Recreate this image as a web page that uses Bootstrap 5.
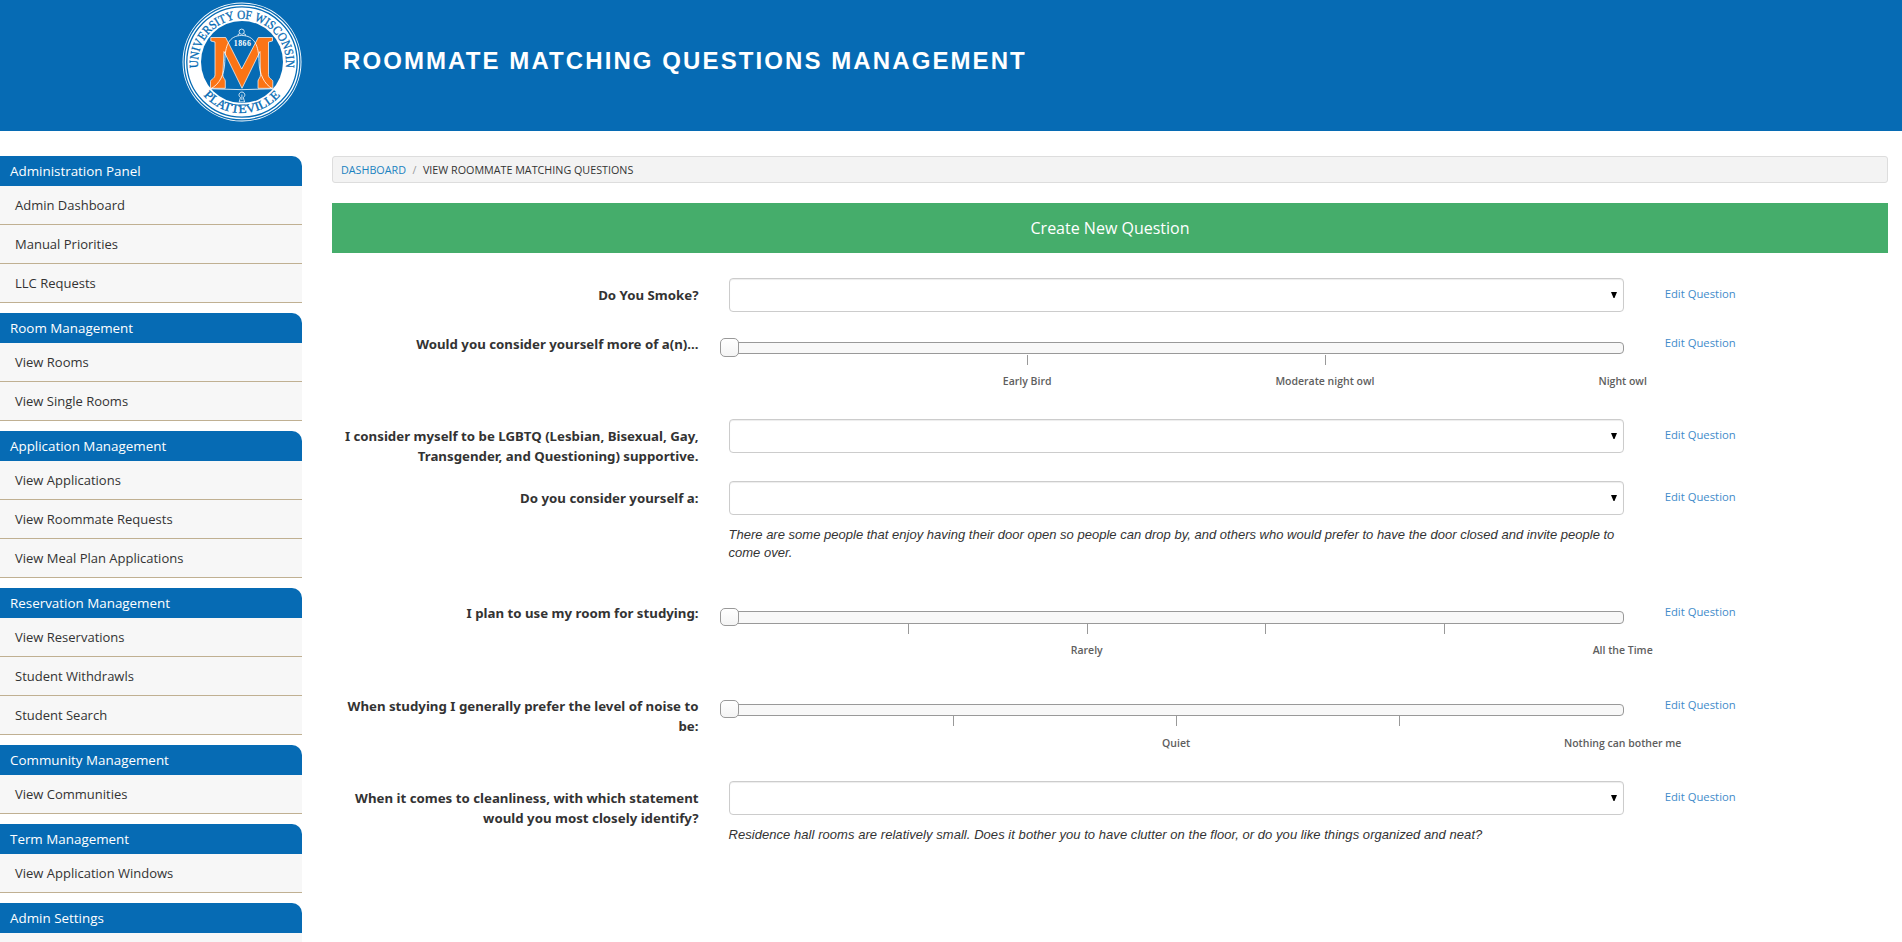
<!DOCTYPE html>
<html lang="en">
<head>
<meta charset="utf-8">
<title>Roommate Matching Questions Management</title>
<meta name="viewport" content="width=device-width, initial-scale=1">
<link href="https://cdn.jsdelivr.net/npm/bootstrap@5.3.0/dist/css/bootstrap.min.css" rel="stylesheet">
<style>
  :root { --brand: #066bb4; }
  body { font-family: "Open Sans", "Noto Sans", sans-serif; font-size: 13px; color: #333; background: #fff; }
  a { text-decoration: none; }
  .site-header { background: var(--brand); height: 131px; padding: 2px 0 0 182px; gap: 41px; }
  .site-header h1 { font: bold 24px/29px "Liberation Sans", Arial, sans-serif; letter-spacing: 2.09px; margin-top: 44px; }
  .side-nav { width: 302px; padding-top: 25px; }
  .panel-title { background: var(--brand); height: 30px; line-height: 30px; padding-left: 10px; font-size: 13.4px; font-weight: 500; border-top-right-radius: 10px; }
  .side-nav .list-group { margin-bottom: 10px; border-radius: 0; }
  .side-nav .list-group .list-group-item { height: 39px; padding: 0 15px; line-height: 39px; background: #f7f7f7; color: #333; border: 0; border-bottom: 1px solid #c0b092; font-size: 13px; }
  .page-main { padding: 25px 14px 0 30px; }
  .breadcrumb { height: 27px; padding: 0 8px; background: #f3f3f3; border: 1px solid #ddd; border-radius: 3px; font-size: 10.75px; line-height: 26px; margin-bottom: 20px; --bs-breadcrumb-item-padding-x: 6.5px; --bs-breadcrumb-item-active-color: #333; --bs-breadcrumb-divider-color: #999; }
  .breadcrumb a { color: #1a82c0; }
  .btn-create { height: 50px; border-radius: 0; background: #45ad6b; color: #fff; font-size: 16px; line-height: 50px; padding: 0; margin-bottom: 25px; border: 0; }
  .question { --bs-gutter-x: 30px; }
  .question label { font: 700 13.25px/20px "Noto Sans", sans-serif; padding-top: 7px; }
  .question .form-select { height: 34px; border: 1px solid #ccc; border-radius: 4px; box-shadow: inset 0 1px 1px rgba(0,0,0,.075); background: #fff url("data:image/svg+xml,%3Csvg xmlns='http://www.w3.org/2000/svg' viewBox='0 0 6 6'%3E%3Cpath d='M0 0h6L3.5 6h-1z'/%3E%3C/svg%3E") no-repeat right 6px top 13px / 6px 6px; }
  .edit-link { padding-left: 26px; font-size: 11.3px; line-height: 20px; padding-top: 6px; }
  .edit-link a { color: #428bca; }
  .help-note { font: italic 13px/18.2px "Liberation Sans", Arial, sans-serif; letter-spacing: .05px; margin: 10.5px 0 0; }
  .q-help .help-note { letter-spacing: .01px; }
  .q-select { height: 49px; }
  .q-slider { height: 92px; }
  .q-two { height: 62px; }
  .q-help { height: 115px; }
  .q-study { height: 93px; }
  .slide-track { height: 12px; margin-top: 15px; border: 1px solid #999; border-radius: 4px; background: #f8f8f8; }
  .slide-knob { left: -10px; top: -5px; width: 19px; height: 19px; border: 1px solid #999; border-radius: 5px; background: linear-gradient(#fff, #f4f4f4); z-index: 1; }
  .q-study .slide-track { height: 13px; }
  .q-study .slide-knob, .q-noise .slide-knob { height: 18px; }
  .q-study .slide-knob { top: -4px; }
  .tick { top: 12px; width: 1px; height: 10px; background: #999; }
  .q-noise .tick { top: 11px; }
  .tick-label { top: 29px; font-size: 10.5px; font-weight: 600; line-height: 18px; color: #5e5e5e; transform: translateX(-50%); }
</style>
</head>
<body class="overflow-hidden vh-100">
<header class="site-header d-flex text-white">
  <svg class="flex-shrink-0" width="120" height="120" viewBox="0 0 120 120" aria-label="University of Wisconsin Platteville seal">
    <defs>
      <path id="arcTop" d="M16.3 66A44 44 0 1 1 103.7 66"/>
      <path id="arcBottom" d="M21.5 93.5A51 51 0 0 0 98.5 93.5"/>
    </defs>
    <circle cx="60" cy="60" r="59.5" fill="#fff"/>
    <circle cx="60" cy="60" r="57.9" fill="none" stroke="#066bb4" stroke-width="1.3"/>
    <circle cx="60" cy="60" r="55.2" fill="none" stroke="#066bb4" stroke-width="1.3"/>
    <circle cx="60" cy="60" r="41" fill="#066bb4"/>
    <g font-family="Liberation Serif, serif" font-size="12.5" fill="#066bb4" stroke="#066bb4" stroke-width=".3">
      <text><textPath href="#arcTop" textLength="148" lengthAdjust="spacingAndGlyphs">UNIVERSITY OF WISCONSIN</textPath></text>
      <text><textPath href="#arcBottom" textLength="87" lengthAdjust="spacingAndGlyphs">PLATTEVILLE</textPath></text>
    </g>
    <path d="M28.8 35.5H43.7L59.7 67 76.3 35.5H90.5V39L86.500 40V72.7C86.500 77 90.8 77 90.8 79.5V86.3H76V79C76 77 78.500 76 78.500 72.7L78 49.5 60 86.3 42 49.5 40.8 72.7C40.8 76 43.300 77 43.300 79V86.3H28.500V79.5C28.500 77 33 77 33 72.7V40L28.800 39z" fill="#fb7415" stroke="#fff" stroke-width=".7"/>
    <g fill="none" stroke="#fff" stroke-width=".8">
      <path d="M28.7 86.8C38 82 42.5 72 42.8 59.5 43 43.5 47 33.5 59.7 33.5 72.5 33.5 76.7 43.5 77 59.5 77.3 72 82 82 90.5 86.8Q60 88.5 28.7 86.8M56 33.6V32.5Q57.5 32 57.8 31.5M63.5 33.6V32.5Q62 32 61.7 31.5"/>
      <circle cx="59.7" cy="29.7" r="2.6"/>
      <path d="M57.2 99.9L58.5 95.5A2.9 2.9 0 1 1 61.3 95.5L62.6 99.9z"/>
      <path d="M59.9 92.5V98"/>
    </g>
    <text x="60.3" y="44.3" text-anchor="middle" font-family="Liberation Serif, serif" font-weight="700" font-size="7.8" textLength="17" fill="#fff">1866</text>
  </svg>
  <h1>ROOMMATE MATCHING QUESTIONS MANAGEMENT</h1>
</header>

<div class="d-flex">
  <nav class="side-nav flex-shrink-0">
    <div class="panel-title text-white">Administration Panel</div>
    <div class="list-group list-group-flush">
      <a class="list-group-item" href="#">Admin Dashboard</a>
      <a class="list-group-item" href="#">Manual Priorities</a>
      <a class="list-group-item" href="#">LLC Requests</a>
    </div>
    <div class="panel-title text-white">Room Management</div>
    <div class="list-group list-group-flush">
      <a class="list-group-item" href="#">View Rooms</a>
      <a class="list-group-item" href="#">View Single Rooms</a>
    </div>
    <div class="panel-title text-white">Application Management</div>
    <div class="list-group list-group-flush">
      <a class="list-group-item" href="#">View Applications</a>
      <a class="list-group-item" href="#">View Roommate Requests</a>
      <a class="list-group-item" href="#">View Meal Plan Applications</a>
    </div>
    <div class="panel-title text-white">Reservation Management</div>
    <div class="list-group list-group-flush">
      <a class="list-group-item" href="#">View Reservations</a>
      <a class="list-group-item" href="#">Student Withdrawls</a>
      <a class="list-group-item" href="#">Student Search</a>
    </div>
    <div class="panel-title text-white">Community Management</div>
    <div class="list-group list-group-flush">
      <a class="list-group-item" href="#">View Communities</a>
    </div>
    <div class="panel-title text-white">Term Management</div>
    <div class="list-group list-group-flush">
      <a class="list-group-item" href="#">View Application Windows</a>
    </div>
    <div class="panel-title text-white">Admin Settings</div>
    <div class="list-group list-group-flush">
      <span class="list-group-item"></span>
    </div>
  </nav>

  <main class="page-main flex-grow-1">
    <ol class="breadcrumb">
      <li class="breadcrumb-item"><a href="#">DASHBOARD</a></li>
      <li class="breadcrumb-item active">VIEW ROOMMATE MATCHING QUESTIONS</li>
    </ol>
    <a class="btn btn-create d-block" href="#">Create New Question</a>

    <form>
      <div class="row question q-select">
        <label class="col-3 text-end">Do You Smoke?</label>
        <div class="col-7"><select class="form-select"></select></div>
        <div class="col-2 edit-link"><a href="#">Edit Question</a></div>
      </div>
      <div class="row question q-slider">
        <label class="col-3 text-end">Would you consider yourself more of a(n)...</label>
        <div class="col-7">
          <div class="slide-track position-relative">
            <span class="slide-knob position-absolute"></span>
            <span class="tick position-absolute" style="left:33.333%"></span>
            <span class="tick position-absolute" style="left:66.667%"></span>
            <span class="tick-label position-absolute text-nowrap" style="left:33.333%">Early Bird</span>
            <span class="tick-label position-absolute text-nowrap" style="left:66.667%">Moderate night owl</span>
            <span class="tick-label position-absolute text-nowrap" style="left:100%">Night owl</span>
          </div>
        </div>
        <div class="col-2 edit-link"><a href="#">Edit Question</a></div>
      </div>
      <div class="row question q-two">
        <label class="col-3 text-end">I consider myself to be LGBTQ (Lesbian, Bisexual, Gay, Transgender, and Questioning) supportive.</label>
        <div class="col-7"><select class="form-select"></select></div>
        <div class="col-2 edit-link"><a href="#">Edit Question</a></div>
      </div>
      <div class="row question q-help">
        <label class="col-3 text-end">Do you consider yourself a:</label>
        <div class="col-7">
          <select class="form-select"></select>
          <p class="help-note">There are some people that enjoy having their door open so people can drop by, and others who would prefer to have the door closed and invite people to come over.</p>
        </div>
        <div class="col-2 edit-link"><a href="#">Edit Question</a></div>
      </div>
      <div class="row question q-study">
        <label class="col-3 text-end">I plan to use my room for studying:</label>
        <div class="col-7">
          <div class="slide-track position-relative">
            <span class="slide-knob position-absolute"></span>
            <span class="tick position-absolute" style="left:20%"></span>
            <span class="tick position-absolute" style="left:40%"></span>
            <span class="tick position-absolute" style="left:60%"></span>
            <span class="tick position-absolute" style="left:80%"></span>
            <span class="tick-label position-absolute text-nowrap" style="left:40%">Rarely</span>
            <span class="tick-label position-absolute text-nowrap" style="left:100%">All the Time</span>
          </div>
        </div>
        <div class="col-2 edit-link"><a href="#">Edit Question</a></div>
      </div>
      <div class="row question q-slider q-noise">
        <label class="col-3 text-end">When studying I generally prefer the level of noise to be:</label>
        <div class="col-7">
          <div class="slide-track position-relative">
            <span class="slide-knob position-absolute"></span>
            <span class="tick position-absolute" style="left:25%"></span>
            <span class="tick position-absolute" style="left:50%"></span>
            <span class="tick position-absolute" style="left:75%"></span>
            <span class="tick-label position-absolute text-nowrap" style="left:50%">Quiet</span>
            <span class="tick-label position-absolute text-nowrap" style="left:100%">Nothing can bother me</span>
          </div>
        </div>
        <div class="col-2 edit-link"><a href="#">Edit Question</a></div>
      </div>
      <div class="row question">
        <label class="col-3 text-end">When it comes to cleanliness, with which statement would you most closely identify?</label>
        <div class="col-7">
          <select class="form-select"></select>
          <p class="help-note">Residence hall rooms are relatively small. Does it bother you to have clutter on the floor, or do you like things organized and neat?</p>
        </div>
        <div class="col-2 edit-link"><a href="#">Edit Question</a></div>
      </div>
    </form>
  </main>
</div>
<script src="https://cdn.jsdelivr.net/npm/bootstrap@5.3.0/dist/js/bootstrap.bundle.min.js"></script>
</body>
</html>
